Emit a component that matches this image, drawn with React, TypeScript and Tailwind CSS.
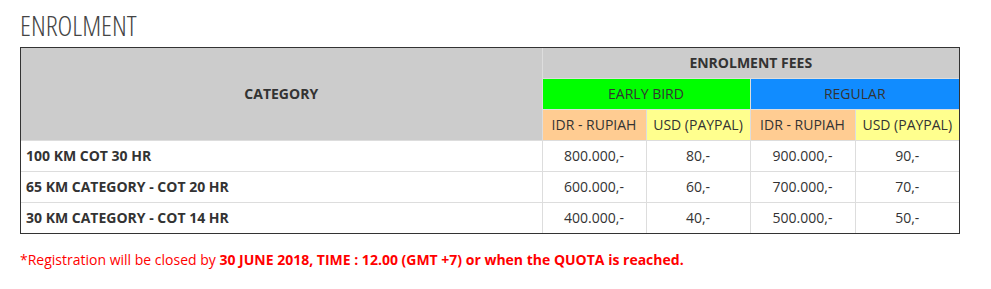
import React from "react";

const rows = [
  ["100 KM COT 30 HR", "800.000,-", "80,-", "900.000,-", "90,-"],
  ["65 KM CATEGORY - COT 20 HR", "600.000,-", "60,-", "700.000,-", "70,-"],
  ["30 KM CATEGORY - COT 14 HR", "400.000,-", "40,-", "500.000,-", "50,-"],
];

export default function App() {
  return (
    <div className="w-[991px] h-[289px] bg-white px-[20px] pt-[8px] text-[#333]" style={{ fontFamily: '"Open Sans", sans-serif' }}>
      <h1 className="text-[28px] leading-[34px] font-light font-stretch-condensed text-[#444] m-0">ENROLMENT</h1>
      <div className="mt-[5px] w-[940px] border border-[#333]">
        <table className="border-collapse border-hidden w-[938px] table-fixed text-[14px]">
          <colgroup>
            <col className="w-[521px]" />
            <col className="w-[104px]" />
            <col className="w-[104px]" />
            <col className="w-[105px]" />
            <col className="w-[104px]" />
          </colgroup>
          <thead>
            <tr className="h-[30px]">
              <th rowSpan={3} className="bg-[#cccccc] border border-[#ddd] font-bold">CATEGORY</th>
              <th colSpan={4} className="bg-[#cccccc] border border-[#ddd] font-bold">ENROLMENT FEES</th>
            </tr>
            <tr className="h-[31px]">
              <th colSpan={2} className="bg-[#00ff00] border border-[#ddd] font-normal">EARLY BIRD</th>
              <th colSpan={2} className="bg-[#118cff] border border-[#ddd] font-normal">REGULAR</th>
            </tr>
            <tr className="h-[31px]">
              <th className="bg-[#ffcc92] border border-[#ddd] font-normal">IDR - RUPIAH</th>
              <th className="bg-[#ffff8e] border border-[#ddd] font-normal">USD (PAYPAL)</th>
              <th className="bg-[#ffcc92] border border-[#ddd] font-normal">IDR - RUPIAH</th>
              <th className="bg-[#ffff8e] border border-[#ddd] font-normal">USD (PAYPAL)</th>
            </tr>
          </thead>
          <tbody>
            {rows.map((r) => (
              <tr key={r[0]} className="h-[31px]">
                <td className="border border-[#ddd] font-bold px-[5px]">{r[0]}</td>
                <td className="border border-[#ddd] text-center">{r[1]}</td>
                <td className="border border-[#ddd] text-center">{r[2]}</td>
                <td className="border border-[#ddd] text-center">{r[3]}</td>
                <td className="border border-[#ddd] text-center">{r[4]}</td>
              </tr>
            ))}
          </tbody>
        </table>
      </div>
      <p className="mt-[15px] text-[14px] text-[#ff0000]">
        *Registration will be closed by <b>30 JUNE 2018, TIME : 12.00 (GMT +7) or when the QUOTA is reached.</b>
      </p>
    </div>
  );
}
